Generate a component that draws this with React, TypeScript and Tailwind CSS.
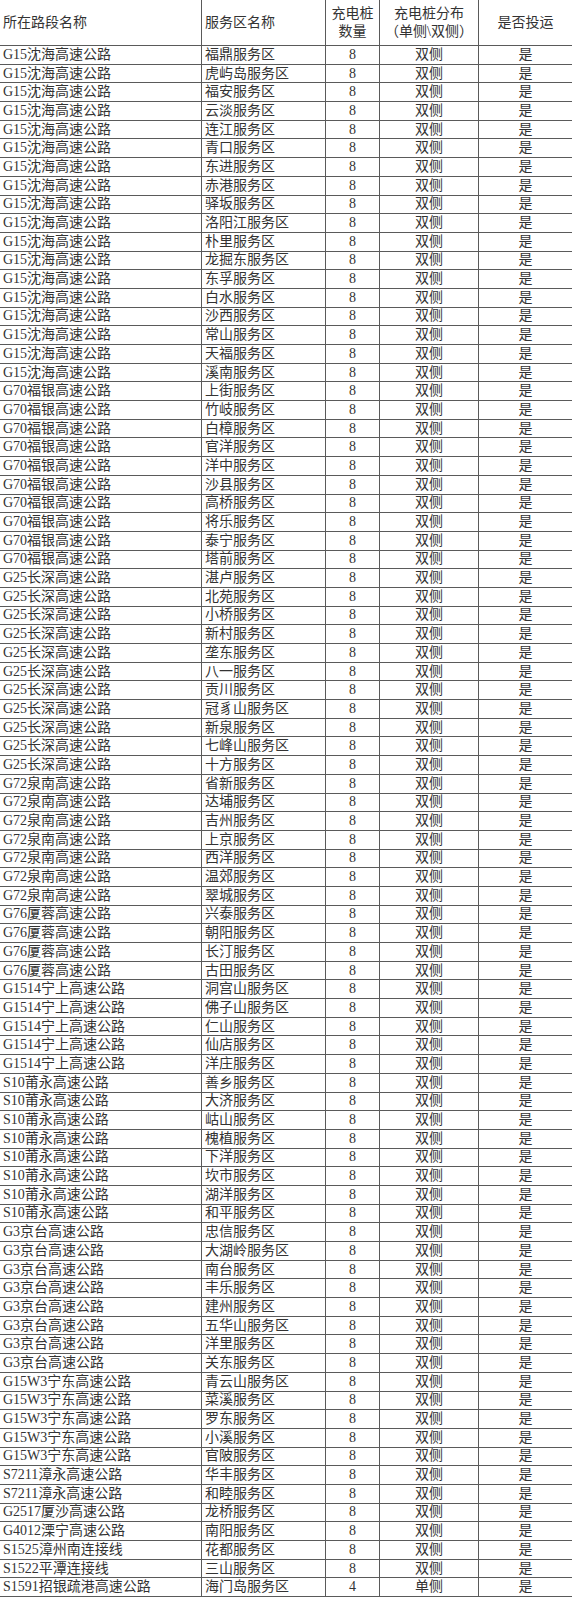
const groups: [string, string[]][] = [
  ["G15沈海高速公路", ["福鼎", "虎屿岛", "福安", "云淡", "连江", "青口", "东进", "赤港", "驿坂", "洛阳江", "朴里", "龙掘东", "东孚", "白水", "沙西", "常山", "天福", "溪南"]],
  ["G70福银高速公路", ["上街", "竹岐", "白樟", "官洋", "洋中", "沙县", "高桥", "将乐", "泰宁", "塔前"]],
  ["G25长深高速公路", ["湛卢", "北苑", "小桥", "新村", "垄东", "八一", "贡川", "冠豸山", "新泉", "七峰山", "十方"]],
  ["G72泉南高速公路", ["省新", "达埔", "吉州", "上京", "西洋", "温郊", "翠城"]],
  ["G76厦蓉高速公路", ["兴泰", "朝阳", "长汀", "古田"]],
  ["G1514宁上高速公路", ["洞宫山", "佛子山", "仁山", "仙店", "洋庄"]],
  ["S10莆永高速公路", ["善乡", "大济", "岵山", "槐植", "下洋", "坎市", "湖洋", "和平"]],
  ["G3京台高速公路", ["忠信", "大湖岭", "南台", "丰乐", "建州", "五华山", "洋里", "关东"]],
  ["G15W3宁东高速公路", ["青云山", "菜溪", "罗东", "小溪", "官陂"]],
  ["S7211漳永高速公路", ["华丰", "和睦"]],
  ["G2517厦沙高速公路", ["龙桥"]],
  ["G4012溧宁高速公路", ["南阳"]],
  ["S1525漳州南连接线", ["花都"]],
  ["S1522平潭连接线", ["三山"]],
];

type Row = { road: string; area: string; count: number; side: string };

const rows: Row[] = groups.flatMap(([road, areas]) =>
  areas.map((a) => ({ road, area: a + "服务区", count: 8, side: "双侧" }))
);
rows.push({ road: "S1591招银疏港高速公路", area: "海门岛服务区", count: 4, side: "单侧" });

const cols = "grid grid-cols-[202px_124px_54px_99px_93px]";
const cell = "border-b border-[#5a5a5a] flex items-center overflow-hidden whitespace-nowrap";
const line = "border-r border-[#5a5a5a]";

const App = () => {
  return (
    <div
      className="w-[572px] bg-white text-[14px] text-[#333]"
      style={{ fontFamily: '"Liberation Serif", "Noto Sans CJK SC", serif' }}
    >
      <div className={cols + " h-[46px] leading-[18px]"}>
        <div className={`${cell} ${line} pl-[3px]`}>所在路段名称</div>
        <div className={`${cell} ${line} pl-[3px]`}>服务区名称</div>
        <div className={`${cell} ${line} justify-center text-center`}>
          充电桩<br />数量
        </div>
        <div className={`${cell} ${line} justify-center text-center`}>
          充电桩分布<br />（单侧\双侧）
        </div>
        <div className={`${cell} justify-center`}>是否投运</div>
      </div>
      {rows.map((r, i) => (
        <div key={i} className={cols + " h-[18.7px] leading-[18px]"}>
          <div className={`${cell} ${line} pl-[3px]`}>{r.road}</div>
          <div className={`${cell} ${line} pl-[3px]`}>{r.area}</div>
          <div className={`${cell} ${line} justify-center`}>{r.count}</div>
          <div className={`${cell} ${line} justify-center`}>{r.side}</div>
          <div className={`${cell} justify-center`}>是</div>
        </div>
      ))}
    </div>
  );
};

export default App;
